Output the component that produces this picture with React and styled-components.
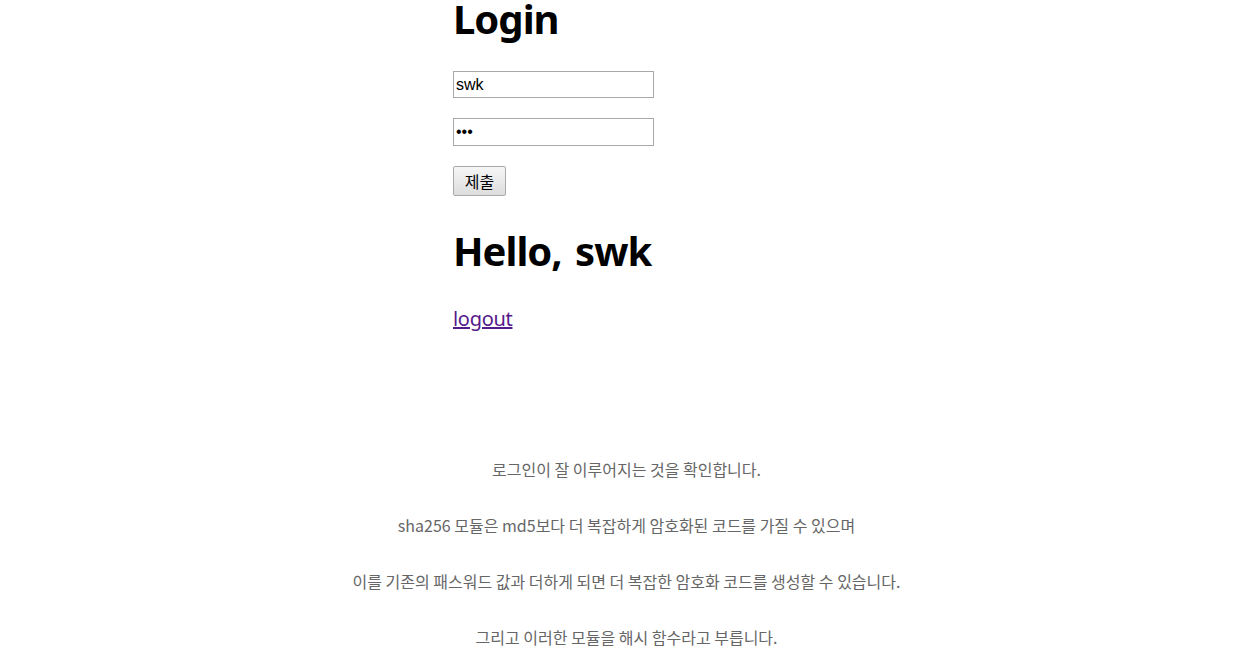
import styled, { createGlobalStyle } from 'styled-components';

const GlobalStyle = createGlobalStyle`
  body {
    margin: 0;
    background: #ffffff;
    font-family: 'Noto Sans', 'Noto Sans CJK KR', sans-serif;
  }
`;

const lines = [
  '로그인이 잘 이루어지는 것을 확인합니다.',
  'sha256 모듈은 md5보다 더 복잡하게 암호화된 코드를 가질 수 있으며',
  '이를 기존의 패스워드 값과 더하게 되면 더 복잡한 암호화 코드를 생성할 수 있습니다.',
  '그리고 이러한 모듈을 해시 함수라고 부릅니다.',
];

const App = () => {
  return (
    <Page>
      <GlobalStyle />
      <Demo>
        <Title>Login</Title>
        <LoginForm onSubmit={(e) => e.preventDefault()}>
          <Field type="text" defaultValue="swk" $height={27} />
          <Field type="password" defaultValue="swk" $height={28} />
          <SubmitButton type="submit">제출</SubmitButton>
        </LoginForm>
        <Greeting>Hello, swk</Greeting>
        <LogoutLink href="#logout">logout</LogoutLink>
      </Demo>
      <Notes>
        {lines.map((line, i) => (
          <Note key={i}>{line}</Note>
        ))}
      </Notes>
    </Page>
  );
};

export default App;

const Page = styled.main`
  display: flex;
  flex-direction: column;
  padding-left: 8px;
`;

const Demo = styled.section`
  display: flex;
  flex-direction: column;
  align-items: flex-start;
  padding-left: 445px;
`;

const Title = styled.h1`
  margin: -5px 0 0 0;
  font-family: 'Noto Sans', 'Noto Sans CJK KR', sans-serif;
  font-size: 40px;
  font-weight: 700;
  letter-spacing: -1px;
  word-spacing: 4px;
  line-height: 48px;
  color: #000;
`;

const LoginForm = styled.form`
  display: flex;
  flex-direction: column;
  align-items: flex-start;
  gap: 20px;
  margin-top: 28px;
`;

const Field = styled.input`
  box-sizing: border-box;
  width: 201px;
  height: ${(p) => p.$height}px;
  padding: 0 2px;
  border: 1px solid #a9a9a9;
  font-family: 'Liberation Sans', Arial, sans-serif;
  font-size: 16px;
  color: #000;
  outline: none;
`;

const SubmitButton = styled.button`
  box-sizing: border-box;
  width: 53px;
  height: 30px;
  padding: 0;
  border: 1px solid #a9a9a9;
  border-radius: 2px;
  background: linear-gradient(#f6f6f6, #dddddd);
  font-family: 'Noto Sans CJK KR', sans-serif;
  font-size: 16px;
  color: #000;
`;

const Greeting = styled(Title)`
  margin: 31px 0 0 0;
`;

const LogoutLink = styled.a`
  margin-top: 30px;
  font-family: 'Noto Sans', 'Noto Sans CJK KR', sans-serif;
  font-size: 20px;
  letter-spacing: -0.3px;
  line-height: 28px;
  color: #551a8b;
  text-decoration: underline;
`;

const Notes = styled.section`
  display: flex;
  flex-direction: column;
  align-items: center;
  gap: 33px;
  margin-top: 125px;
`;

const Note = styled.p`
  margin: 0;
  font-family: 'Noto Sans CJK KR', sans-serif;
  font-size: 16px;
  line-height: 23px;
  color: #666666;
`;
